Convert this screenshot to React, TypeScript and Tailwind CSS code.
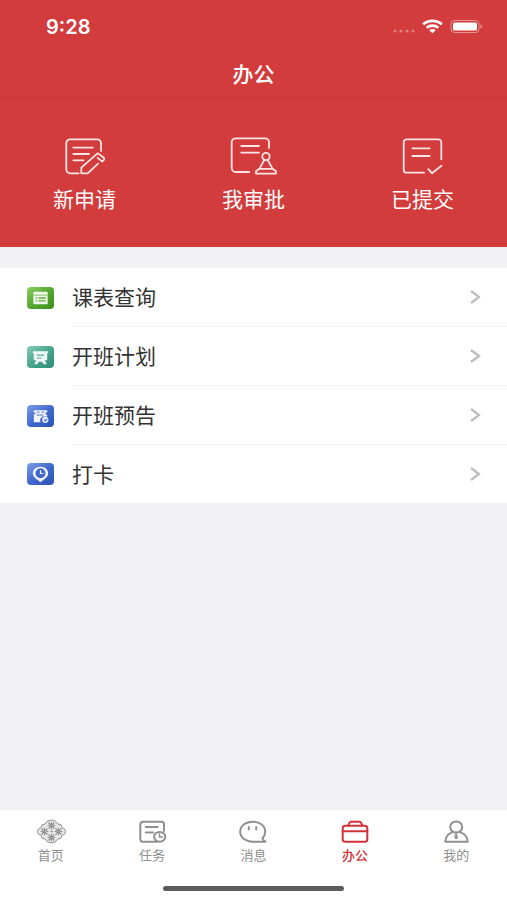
import React from 'react';

const actions = [
  {
    label: '新申请',
    icon: (
      <>
        <path d="M40 17V9.3a4 4 0 0 0-4-4H9.300a4 4 0 0 0-4 4v26a4 4 0 0 0 4 4h8.400" />
        <path d="M12.300 13.700h19.400M12.300 20H28M12.300 26.300h10.200" />
        <path d="M37 29.600 26.700 39.300h-6.400v-5.600l15.400-13.600a1.800 1.800 0 0 1 2.400 0l4.400 3.400a1.800 1.800 0 0 1 .2 2.600l-1.600 1.400-4.400-3.600" />
      </>
    ),
  },
  {
    label: '我审批',
    icon: (
      <>
        <path d="M39 14V8.300a4 4 0 0 0-4-4H5.700a4 4 0 0 0-4 4V34a4 4 0 0 0 4 4h13.600" />
        <path d="M11.300 12H29M11.300 18.700H29" />
        <circle cx="36" cy="22.500" r="3.700" />
        <path d="M34.300 26 29.500 34.600M37.700 26l4.800 8.600" />
        <path d="M29.300 34.800h13.400l3.300 2.400v2.400H26v-2.400z" />
      </>
    ),
  },
  {
    label: '已提交',
    icon: (
      <>
        <path d="M42.300 25.300v-17a3 3 0 0 0-3-3H7.700a3 3 0 0 0-3 3v27.400a3 3 0 0 0 3 3H25" />
        <path d="M13.300 14.300h17.400M13.300 22h17.400" />
        <path d="m29.300 35.200 3.600 4 9.600-7.400" />
      </>
    ),
  },
];

const rows = [
  {
    label: '课表查询',
    tile: 'from-[#8fce62] via-[#55a830] to-[#3c8f1b]',
    icon: (
      <>
        <rect x="6" y="5" width="15" height="13" rx="1" fill="#fff" fillOpacity=".9" />
        <path d="M6 8.500h15" stroke="#7fc05a" />
        <path d="M8.500 11.500H10M11.500 11.500H19M8.500 14.500H10M11.500 14.500H19" stroke="#5cab38" strokeWidth="1.5" />
      </>
    ),
  },
  {
    label: '开班计划',
    tile: 'from-[#85cdb8] via-[#47a68d] to-[#2f8c76]',
    icon: (
      <>
        <path d="M5.500 5.500h16v2h-1V15h-2.500l2 4h-3L15 16.500h-3L10 19H7l2-4H6.500V7.500h-1z" fill="#fff" fillOpacity=".92" />
        <path d="M9.500 9.500h8M9.500 12.500h5" stroke="#50aa93" strokeWidth="1.2" />
      </>
    ),
  },
  {
    label: '开班预告',
    tile: 'from-[#7f9fe8] via-[#4169cd] to-[#2c51b5]',
    icon: (
      <>
        <path d="M6.500 5.500h14v2L18 9l2.500 1.500V12h-5a5 5 0 0 0-2 6h-7v-8L9 9 6.500 7.500z" fill="#fff" fillOpacity=".92" />
        <path d="M9.500 7.500h3M14.500 7.500h3M9.500 10.500h7" stroke="#4a70d0" />
        <circle cx="18.5" cy="15.5" r="3.3" fill="#e8eefc" />
        <path d="m17 15.300 1.400 1.300 2-2.200" stroke="#4169cd" strokeWidth="1.1" />
      </>
    ),
  },
  {
    label: '打卡',
    tile: 'from-[#7f9fe8] via-[#4169cd] to-[#2c51b5]',
    icon: (
      <>
        <path
          d="M13.500 4C18 4 21.500 7 21.500 10.900c0 3.400-4 6-8 9.100-4-3.100-8-5.700-8-9.100C5.500 7 9 4 13.500 4z"
          fill="#fff"
          fillOpacity=".95"
        />
        <circle cx="13.5" cy="10.8" r="5.2" fill="#4169cd" />
        <path d="M13.500 7.500V11h3" stroke="#fff" strokeWidth="1.2" />
      </>
    ),
  },
];

const Petals = ({ x, y }: { x: number; y: number }) => (
  <g transform={`translate(${x} ${y})`}>
    <path d="M-2.500-2.500 2.500 2.500M2.500-2.500-2.500 2.500" strokeWidth="1.5" />
    <path d="M0-3.500v1.500M0 2v1.500M-3.500 0H-2M2 0h1.500" strokeWidth="1" />
  </g>
);

const tabs = [
  {
    label: '首页',
    icon: (
      <>
        <path
          d="M11 2.500q4.500-3 9 0l1.500 2.300 3.500 1 .8 2.700 2.700 1.300q2 2.700 0 5.400l-2.700 1.300-.8 2.700-3.500 1-1.500 2.300q-4.500 3-9 0l-1.500-2.300-3.500-1-.8-2.700-2.700-1.300q-2-2.700 0-5.400l2.700-1.300.8-2.700 3.500-1z"
          fill="#e9e9e9"
          strokeWidth="1"
        />
        <Petals x={15.5} y={6.5} />
        <Petals x={15.5} y={18.5} />
        <Petals x={8.5} y={12.5} />
        <Petals x={22.5} y={12.5} />
        <circle cx="15.5" cy="12.5" r=".6" strokeWidth="1" />
      </>
    ),
  },
  {
    label: '任务',
    icon: (
      <>
        <path d="M27 12V5.200a2.500 2.500 0 0 0-2.500-2.500H5.800a2.500 2.500 0 0 0-2.500 2.500v15a2.500 2.500 0 0 0 2.500 2.500h14" />
        <path d="M8.700 8h12M8.700 13.600h7.500" />
        <ellipse cx="22.7" cy="17.8" rx="5.6" ry="4.9" />
        <path d="M22.500 15v3h3" strokeWidth="1.5" />
      </>
    ),
  },
  {
    label: '消息',
    icon: (
      <>
        <path d="M27.500 22.700H14.700c-7.200 0-12.500-4.300-12.500-10s5.300-10 12.500-10 12.500 4.300 12.500 10c0 2.700-1.100 4.800-2.700 6.500.4 1.600 1.400 2.800 3 3.500z" />
        <path d="M10.800 8v2.500M18.200 8v2.500" />
      </>
    ),
  },
  {
    label: '办公',
    active: true,
    icon: (
      <>
        <path d="m8.300 6.700 1.200-3a1.500 1.500 0 0 1 1.400-1h8.800a1.500 1.500 0 0 1 1.400 1l1.200 3" />
        <rect x="2.7" y="6.7" width="24.6" height="16" rx="2.5" />
        <path d="M2.700 12.300h24.600" />
      </>
    ),
  },
  {
    label: '我的',
    icon: (
      <>
        <ellipse cx="15.2" cy="8" rx="6" ry="5.5" />
        <path d="M10.500 13.600c-4 1.400-6 4.900-6.200 9.200h22.400c-.2-4.300-2.600-7.800-6.800-9.200" />
        <path d="m15.200 14.500 1.300 4.200-1.300 1.400-1.300-1.400z" fill="currentColor" strokeWidth="1" />
      </>
    ),
  },
];

const StatusBar = () => (
  <div className="flex h-[52px] items-center justify-between pt-0.5 pr-6 pl-[46px]">
    <span className="font-[Inter,sans-serif] text-[20px] leading-7 font-semibold">9:28</span>
    <svg width="91" height="18" viewBox="0 0 91 18" fill="none" aria-hidden="true">
      <g fill="#fff" fillOpacity=".35">
        <circle cx="3" cy="13" r="1.6" />
        <circle cx="9" cy="13" r="1.6" />
        <circle cx="15" cy="13" r="1.6" />
        <circle cx="21" cy="13" r="1.6" />
      </g>
      <g stroke="#fff" strokeWidth="2.6">
        <path d="M31.200 6.300c5.200-4.600 13.400-4.600 18.600 0" />
        <path d="M34.700 9.700c3.300-2.800 8.300-2.800 11.600 0" />
      </g>
      <path d="M37.300 12.200c1.800-1.500 4.600-1.500 6.400 0l-3.200 3z" fill="#fff" />
      <rect x="59" y="2.5" width="28" height="12" rx="3.5" stroke="#fff" strokeOpacity=".45" />
      <rect x="61" y="4.5" width="24" height="8" rx="1.5" fill="#fff" />
      <path d="M88.500 6.500c2 .5 2 3.500 0 4z" fill="#fff" fillOpacity=".5" />
    </svg>
  </div>
);

export default function App() {
  return (
    <div className="flex min-h-screen flex-col bg-[#f0f0f5] font-['Noto_Sans_CJK_SC',sans-serif]">
      <header className="bg-[#d23c3d] text-white">
        <StatusBar />
        <h1 className="flex h-[46px] items-center justify-center border-b border-[#c73638] pb-0.5 text-[21px] font-medium">
          办公
        </h1>
        <div className="grid h-[149px] grid-cols-3">
          {actions.map((action) => (
            <button key={action.label} type="button" className="flex flex-col items-center pt-9">
              <svg
                width="48"
                height="44"
                viewBox="0 0 48 44"
                fill="none"
                stroke="#fbe4e3"
                strokeWidth="1.8"
                strokeLinecap="round"
                strokeLinejoin="round"
                aria-hidden="true"
              >
                {action.icon}
              </svg>
              <span className="mt-1.5 text-[21px] leading-7">{action.label}</span>
            </button>
          ))}
        </div>
      </header>

      <main className="flex-1 pt-[21px]">
        <ul className="bg-white">
          {rows.map((row, index) => (
            <li key={row.label}>
              <button type="button" className="flex w-full items-center pl-[27px] text-left">
                <span className={`flex h-[22px] w-[27px] items-center rounded bg-linear-to-br ${row.tile}`}>
                  <svg width="27" height="22" viewBox="0 0 27 23" fill="none" aria-hidden="true">
                    {row.icon}
                  </svg>
                </span>
                <span
                  className={`ml-[18px] flex flex-1 items-center justify-between pr-[26px] ${
                    index < rows.length - 1 ? 'border-b border-[#f3f3f5]' : ''
                  }`}
                >
                  <span className="pb-0.5 text-[21px] leading-[56px] text-[#333]">{row.label}</span>
                  <svg
                    width="12"
                    height="14"
                    viewBox="0 0 12 14"
                    fill="none"
                    stroke="#bdbdbd"
                    strokeWidth="2.2"
                    aria-hidden="true"
                  >
                    <path d="m2 1 8 6-8 6" />
                  </svg>
                </span>
              </button>
            </li>
          ))}
        </ul>
      </main>

      <footer className="flex h-[90px] flex-col items-center justify-between bg-white pb-[9px]">
        <nav className="grid w-full grid-cols-5 pt-[9px]">
          {tabs.map((tab) => (
            <button
              key={tab.label}
              type="button"
              className={`flex flex-col items-center ${tab.active ? 'text-[#d23338]' : 'text-[#8f8f8f]'}`}
            >
              <svg
                width="30"
                height="26"
                viewBox="0 0 30 26"
                fill="none"
                stroke="currentColor"
                strokeWidth="2"
                strokeLinecap="round"
                strokeLinejoin="round"
                aria-hidden="true"
              >
                {tab.icon}
              </svg>
              <span className={`text-[13px] leading-5 ${tab.active ? 'font-medium' : ''}`}>{tab.label}</span>
            </button>
          ))}
        </nav>
        <div className="h-[5px] w-[181px] rounded-full bg-[#5c5c5c]" />
      </footer>
    </div>
  );
}
